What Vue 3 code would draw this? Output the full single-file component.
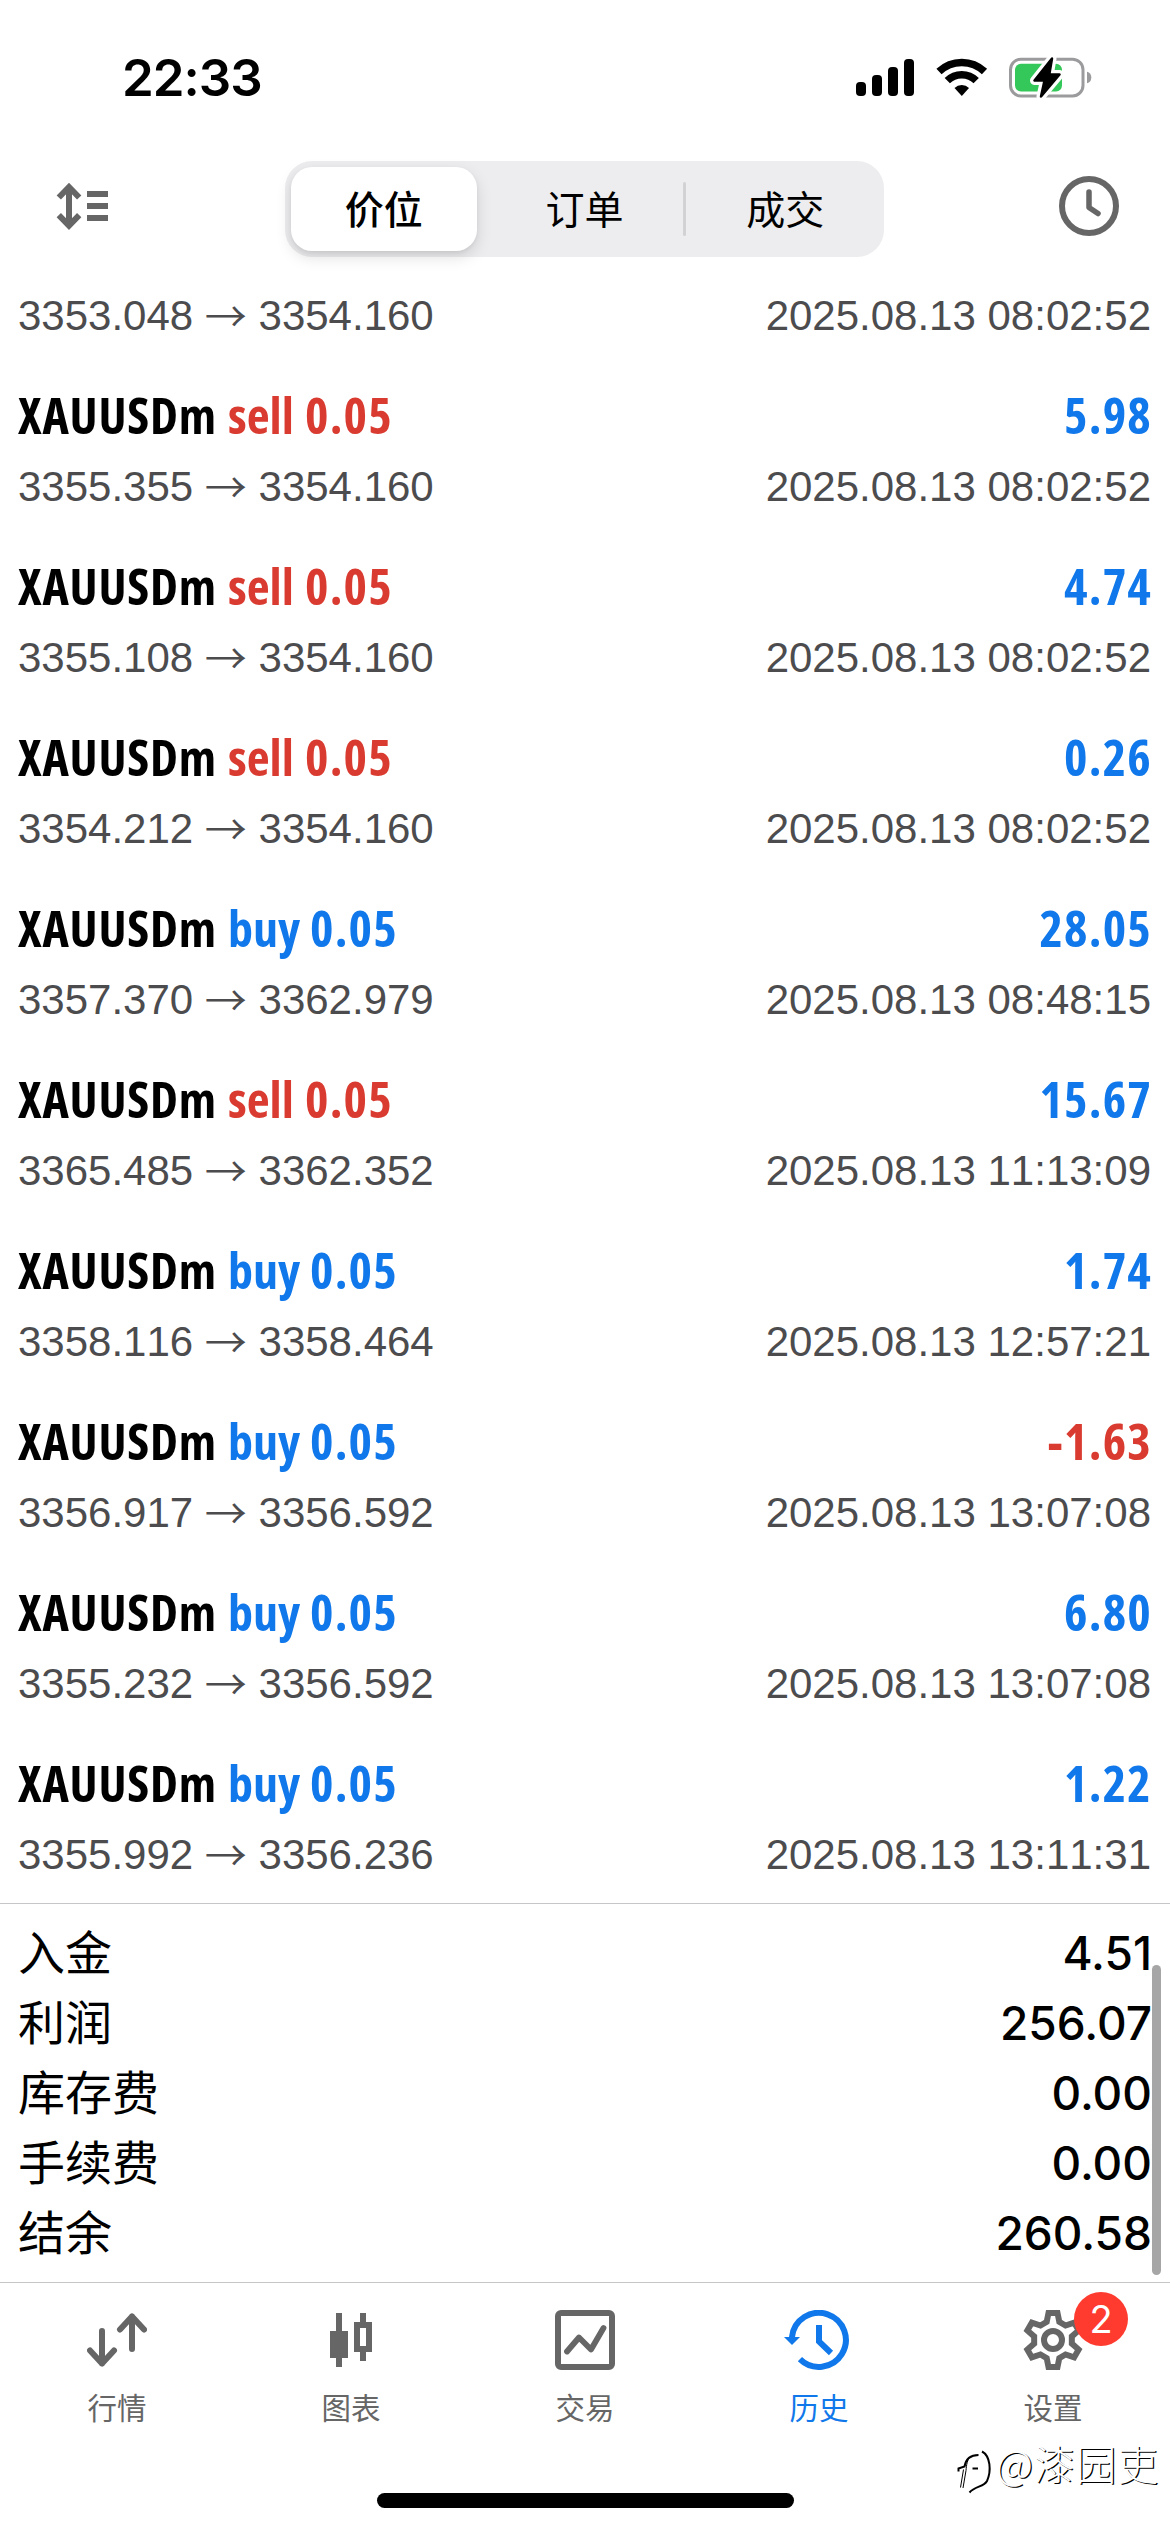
<script setup>
const segments = ['价位', '订单', '成交']

const trades = [
  { side: 'sell', open: '3355.355', close: '3354.160', time: '2025.08.13 08:02:52', profit: '5.98' },
  { side: 'sell', open: '3355.108', close: '3354.160', time: '2025.08.13 08:02:52', profit: '4.74' },
  { side: 'sell', open: '3354.212', close: '3354.160', time: '2025.08.13 08:02:52', profit: '0.26' },
  { side: 'buy', open: '3357.370', close: '3362.979', time: '2025.08.13 08:48:15', profit: '28.05' },
  { side: 'sell', open: '3365.485', close: '3362.352', time: '2025.08.13 11:13:09', profit: '15.67' },
  { side: 'buy', open: '3358.116', close: '3358.464', time: '2025.08.13 12:57:21', profit: '1.74' },
  { side: 'buy', open: '3356.917', close: '3356.592', time: '2025.08.13 13:07:08', profit: '-1.63' },
  { side: 'buy', open: '3355.232', close: '3356.592', time: '2025.08.13 13:07:08', profit: '6.80' },
  { side: 'buy', open: '3355.992', close: '3356.236', time: '2025.08.13 13:11:31', profit: '1.22' },
]

const totals = [
  { label: '入金', value: '4.51' },
  { label: '利润', value: '256.07' },
  { label: '库存费', value: '0.00' },
  { label: '手续费', value: '0.00' },
  { label: '结余', value: '260.58' },
]

// Six-tooth gear outline, one tooth rotated around the centre
const tooth = [[-6.3, -18.1], [-4.5, -27], [4.5, -27], [6.3, -18.1]]
const gear = Array.from({ length: 6 }, (_, i) => {
  const a = (i * Math.PI) / 3
  return tooth
    .map(([x, y]) => `${(x * Math.cos(a) - y * Math.sin(a)).toFixed(2)},${(x * Math.sin(a) + y * Math.cos(a)).toFixed(2)}`)
    .join(' ')
}).join(' ')
</script>

<template>
  <div class="screen">
    <header class="status">
      <span class="clock">22:33</span>
      <svg class="status-icons" width="236" height="44" viewBox="856 56 236 44">
        <rect x="856" y="82" width="10" height="14" rx="4" />
        <rect x="872" y="75" width="10" height="21" rx="4" />
        <rect x="888" y="67" width="10" height="29" rx="4" />
        <rect x="904" y="59" width="10" height="37" rx="4" />
        <g fill="none" stroke="#000">
          <path d="M939 71.5A33 33 0 0 1 984.500 71.500" stroke-width="7.500" />
          <path d="M947.300 80.700A20.500 20.500 0 0 1 976.200 80.700" stroke-width="7.500" />
        </g>
        <path d="M954.500 88A10.500 10.500 0 0 1 969 88L961.800 96Z" />
        <rect x="1010.500" y="59.200" width="72.500" height="36.800" rx="10.500" fill="none" stroke="#9b9b9d" stroke-width="3" />
        <path d="M1087 71.700Q1091.300 73 1091.300 77.500Q1091.300 82 1087 83.300Z" fill="#9b9b9d" />
        <rect x="1015" y="63.700" width="47" height="27.800" rx="6" fill="#34c759" />
        <path
          d="M1052 58.500L1034.500 80.500H1044.500L1041 96.500L1059.500 74.500H1049.300Z"
          stroke="#fff" stroke-width="9" stroke-linejoin="round"
        />
        <path
          d="M1052 58.500L1034.500 80.500H1044.500L1041 96.500L1059.500 74.500H1049.300Z"
          stroke="#000" stroke-width="2.500" stroke-linejoin="round"
        />
      </svg>
    </header>

    <nav class="toolbar">
      <svg class="sort" width="52" height="48" viewBox="56 182 52 48" fill="none" stroke="#666" stroke-width="6">
        <path d="M69 187V225.500M58.800 197.500L69 187L79.200 197.500M58.800 215.200L69 225.700L79.200 215.200" />
        <path d="M87 194H108M87 206H108M87 218H108" />
      </svg>
      <div class="segmented">
        <button
          v-for="(name, i) in segments"
          :key="name"
          class="segment"
          :class="{ selected: i === 0, divided: i === 2 }"
        >{{ name }}</button>
      </div>
      <svg class="history" width="60" height="60" viewBox="0 0 60 60" fill="none" stroke="#666" stroke-width="6">
        <circle cx="30" cy="30" r="27" />
        <path d="M30 16V31.500L39 37.500" stroke-linecap="round" stroke-linejoin="round" stroke-width="5.500" />
      </svg>
    </nav>

    <main class="list">
      <div class="detail">
        <span>3353.048 <i class="arrow">→</i> 3354.160</span>
        <span>2025.08.13 08:02:52</span>
      </div>
      <section v-for="(t, i) in trades" :key="i" class="trade">
        <div class="title">
          <div class="deal">
            <span class="symbol">XAUUSDm</span>
            <span class="side" :class="t.side">{{ t.side }}</span>
            <span class="volume" :class="t.side">0.05</span>
          </div>
          <span class="profit" :class="t.profit.startsWith('-') ? 'sell' : 'buy'">{{ t.profit }}</span>
        </div>
        <div class="detail">
          <span>{{ t.open }} <i class="arrow">→</i> {{ t.close }}</span>
          <span>{{ t.time }}</span>
        </div>
      </section>
    </main>

    <section class="totals">
      <div v-for="row in totals" :key="row.label" class="total">
        <span class="label">{{ row.label }}</span>
        <span class="value">{{ row.value }}</span>
      </div>
      <div class="scrollbar"></div>
    </section>

    <footer class="tabs">
      <div class="tab">
        <svg width="60" height="60" viewBox="87 2310 60 60" fill="none" stroke="#666" stroke-width="6" stroke-linecap="round" stroke-linejoin="round">
          <path d="M102 2331V2363.500M90 2350.500L102 2363.500L114 2350.500" />
          <path d="M132 2349V2316.500M120 2329.500L132 2316.500L144 2329.500" />
        </svg>
        <span>行情</span>
      </div>
      <div class="tab">
        <svg width="60" height="60" viewBox="321 2310 60 60" fill="#666">
          <path d="M336 2313h6v18h6v27h-6v9h-6v-9h-6v-27h6z" />
          <path fill-rule="evenodd" d="M360 2313h6v9h6v30h-6v9h-6v-9h-6v-30h6zM360 2328v18h6v-18z" />
        </svg>
        <span>图表</span>
      </div>
      <div class="tab">
        <svg width="60" height="60" viewBox="0 0 60 60" fill="none" stroke="#666" stroke-width="6" stroke-linejoin="round" stroke-linecap="round">
          <rect x="3" y="3" width="54" height="54" rx="3" />
          <path d="M12 41.500L24 27.500L36 39.500L48.500 18" stroke-width="5.800" />
        </svg>
        <span>交易</span>
      </div>
      <div class="tab active">
        <svg width="70" height="60" viewBox="784 2310 70 60" fill="none" stroke="#1078ea" stroke-width="6">
          <path d="M792 2339V2337A27 27 0 1 1 799.900 2359.100" />
          <path d="M784 2337H800L792 2345Z" fill="#1078ea" stroke="none" />
          <path d="M819 2325V2341.500L831 2353" />
        </svg>
        <span>历史</span>
      </div>
      <div class="tab">
        <svg width="60" height="60" viewBox="-30 -30 60 60" fill="none" stroke="#666" stroke-width="6">
          <polygon :points="gear" />
          <circle r="9" />
        </svg>
        <span>设置</span>
        <b class="badge">2</b>
      </div>
    </footer>

    <div class="watermark">
      <svg width="38" height="46" viewBox="955 2448 38 46" fill="none" stroke="#000" stroke-width="2">
        <path d="M958.500 2470.500V2467.500L964.500 2465.500C966 2457 971 2454 978.500 2454" />
        <path d="M963.500 2468.500L960.500 2486.500M970.500 2455.500C967 2459 966.500 2464 966 2469.500L963 2487" stroke-width="1" />
        <path d="M982 2450.500C990.500 2455 991.500 2470 987 2480C984 2486 975 2485 969.500 2491.500" />
        <path d="M972.500 2467.500H978" />
      </svg>
      <span>@漆园吏</span>
    </div>
    <div class="home"></div>
  </div>
</template>

<style>
body {
  margin: 0;
  background: #fff;
}
</style>

<style scoped>
.screen {
  position: relative;
  width: 1170px;
  height: 2532px;
  display: flex;
  flex-direction: column;
  overflow: hidden;
  background: #fff;
  color: #000;
  font-family: "Inter", "Noto Sans CJK SC", sans-serif;
}

.status {
  height: 161px;
  flex: none;
  display: flex;
  justify-content: space-between;
  padding: 0 78px 0 122px;
  box-sizing: border-box;
}

.clock {
  padding-top: 47px;
  font-size: 51px;
  line-height: 62px;
  font-weight: 600;
  letter-spacing: -1px;
}

.status-icons {
  margin-top: 56px;
}

.toolbar {
  height: 96px;
  flex: none;
  display: flex;
  align-items: center;
  justify-content: space-between;
  padding: 0 51px 0 56px;
}

.sort {
  margin: -6px 126px 0 0;
}

.history {
  margin-top: -6px;
  margin-left: 124px;
}

.segmented {
  width: 599px;
  height: 96px;
  padding: 6px;
  box-sizing: border-box;
  display: flex;
  gap: 15px;
  border-radius: 27px;
  background: #ededef;
}

.segment {
  position: relative;
  flex: 1;
  padding: 0 0 4px;
  border: 0;
  border-radius: 21px;
  background: none;
  color: #000;
  font: 400 39px/80px "Noto Sans CJK SC", sans-serif;
}

.segment.selected {
  background: #fff;
  font-weight: 500;
  box-shadow: 0 6px 16px rgba(0, 0, 0, 0.13), 0 2px 4px rgba(0, 0, 0, 0.06);
}

.segment.divided::before {
  content: "";
  position: absolute;
  left: -9px;
  top: 15px;
  width: 3px;
  height: 54px;
  border-radius: 2px;
  background: #d2d2d5;
}

.list {
  flex: none;
  padding: 35px 19px 24px 18px;
}

.trade {
  padding-top: 45px;
}

.title {
  display: flex;
  justify-content: space-between;
  height: 60px;
  margin-bottom: 18px;
  font: 700 50px/60px "Open Sans", sans-serif;
  font-stretch: 75%;
}

.deal {
  display: flex;
}

.symbol {
  width: 210px;
  letter-spacing: 0.8px;
}

.side.sell {
  width: 77px;
}

.side.buy {
  width: 82px;
}

.volume,
.profit {
  letter-spacing: 1.2px;
}

.profit {
  margin-right: -1px;
}

.sell {
  color: #da3b30;
}

.buy {
  color: #1078ea;
}

.detail {
  display: flex;
  justify-content: space-between;
  height: 48px;
  color: #4c4c4e;
  font: 42px/48px "Liberation Sans", Arial, sans-serif;
  font-kerning: none;
  white-space: nowrap;
}

.arrow {
  position: relative;
  top: 2px;
  font: normal 350 42px/40px "Noto Sans CJK SC", sans-serif;
}

.totals {
  position: relative;
  flex: none;
  height: 379px;
  padding: 14px 18px 0 18px;
  box-sizing: border-box;
  border-top: 1px solid #c6c6c8;
}

.total {
  display: flex;
  justify-content: space-between;
  height: 70px;
}

.label {
  margin-top: -3px;
  font: 400 47px/70px "Noto Sans CJK SC", sans-serif;
}

.value {
  font-size: 46px;
  line-height: 70px;
  font-weight: 500;
}

.scrollbar {
  position: absolute;
  right: 9px;
  top: 61px;
  width: 9px;
  height: 310px;
  border-radius: 5px;
  background: #a6a6a6;
}

.tabs {
  flex: none;
  height: 211px;
  box-sizing: border-box;
  display: flex;
  border-top: 1px solid #c6c6c8;
}

.tab {
  position: relative;
  flex: 1;
  display: flex;
  flex-direction: column;
  align-items: center;
  padding-top: 27px;
  color: #666;
  font: 400 29.500px/40px "Noto Sans CJK SC", sans-serif;
}

.tab span {
  margin-top: 16px;
}

.tab.active {
  color: #1078ea;
}

.badge {
  position: absolute;
  left: 138px;
  top: 9px;
  width: 54px;
  height: 54px;
  border-radius: 50%;
  background: #ff3b30;
  color: #fff;
  font: 400 38px/54px "Inter", sans-serif;
  text-align: center;
}

.home {
  flex: none;
  align-self: center;
  width: 417px;
  height: 15px;
  border-radius: 8px;
  background: #000;
}

.watermark {
  position: absolute;
  left: 955px;
  top: 2431px;
  display: flex;
  align-items: center;
  gap: 3px;
  color: #fff;
  font: 300 40.500px/60px "Noto Sans CJK SC", sans-serif;
  letter-spacing: 1.2px;
  text-shadow: 1.200px 1.200px 0 #000;
}

.watermark svg {
  margin-top: 18px;
}
</style>
